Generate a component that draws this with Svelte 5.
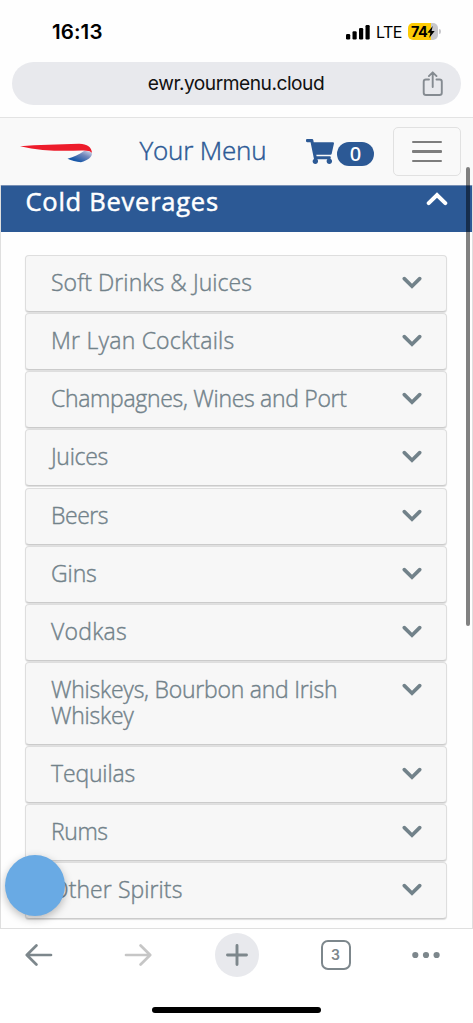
<script>
  const items = [
    { name: 'Soft Drinks & Juices', spacing: 0.08 },
    { name: 'Mr Lyan Cocktails', spacing: 0.22 },
    { name: 'Champagnes, Wines and Port', spacing: -0.31 },
    { name: 'Juices', spacing: -0.3 },
    { name: 'Beers', spacing: -0.45 },
    { name: 'Gins', spacing: -0.1 },
    { name: 'Vodkas', spacing: 0.25 },
    { name: 'Whiskeys, Bourbon and Irish Whiskey', spacing: -0.24, tall: true },
    { name: 'Tequilas', spacing: -0.15 },
    { name: 'Rums', spacing: -0.4 },
    { name: 'Other Spirits', spacing: 0.08 }
  ];
</script>

<div class="screen">
  <div class="status">
    <span class="time">16:13</span>
    <div class="indicators">
      <svg width="24" height="16" viewBox="0 0 24 16"><rect x="0" y="10" width="4.2" height="5.4" rx="1.2"/><rect x="6.5" y="7.3" width="4.2" height="8.1" rx="1.2"/><rect x="13" y="4" width="4.2" height="11.4" rx="1.2"/><rect x="19.5" y="1" width="4.2" height="14.4" rx="1.2"/></svg>
      <span class="lte">LTE</span>
      <div class="battery"><span>74</span><svg width="8" height="12" viewBox="0 0 8 12"><path d="M5.7 0 0.3 6.7H3.4L2.2 12 7.7 5H4.6Z"/></svg></div>
      <i class="cap"></i>
    </div>
  </div>

  <div class="address">
    <span>ewr.yourmenu.cloud</span>
    <svg class="share" width="22" height="26" viewBox="0 0 22 26" fill="none" stroke="#858b91" stroke-width="1.9" stroke-linecap="round" stroke-linejoin="round"><path d="M7 8.5H4Q1.7 8.5 1.7 10.8V21.7Q1.7 24 4 24H17.5Q19.8 24 19.8 21.7V10.8Q19.8 8.5 17.5 8.5H14.5M10.7 16V1.4M6.9 5.1 10.7 1.3 14.5 5.1"/></svg>
  </div>

  <nav>
    <svg class="logo" width="74" height="22" viewBox="0 0 74 22">
      <defs><linearGradient id="fin" x1="0" y1="1" x2="1" y2="0"><stop offset=".25" stop-color="#1858a8"/><stop offset=".65" stop-color="#7187bb"/><stop offset="1" stop-color="#d9dcec"/></linearGradient></defs>
      <path fill="#ed1c2b" d="M0 3.2C18 2.1 38 1.200 59 .8C67 .7 71.800 4.300 72 10C69.800 7.900 66.500 7.300 61.500 7.500C41 8.200 20 8 0 3.200Z"/>
      <path fill="url(#fin)" d="M47.5 15.8C54 14 59 11.7 64 8.1Q70 7.5 72 10.4C72 14 68 17 61 19.2C56 18.9 51.5 17.6 47.5 15.8Z"/>
    </svg>
    <a class="brand" href="#menu">Your Menu</a>
    <svg class="cart" width="28" height="25" viewBox="0 0 576 512" preserveAspectRatio="none" fill="#2c5995"><path d="M528.1 301.3l47.3-208C578.8 78.3 567.4 64 552 64H159.2l-9.2-44.8C147.8 8 137.9 0 126.5 0H24C10.7 0 0 10.7 0 24v16c0 13.3 10.7 24 24 24h69.9l70.2 343.4C147.3 417.1 136 435.2 136 456c0 30.9 25.1 56 56 56s56-25.1 56-56c0-15.7-6.4-29.8-16.8-40h209.6C430.4 426.2 424 440.3 424 456c0 30.9 25.1 56 56 56s56-25.1 56-56c0-22.2-12.9-41.3-31.6-50.4l5.5-24.3c3.4-15-8-29.3-23.4-29.3H218.1l-6.5-32h293.1c11.2 0 20.9-7.8 23.4-18.7z"/></svg>
    <span class="badge">0</span>
    <button class="toggle" aria-label="Menu"><i></i><i></i><i></i></button>
  </nav>

  <main>
    <header><h1>Cold Beverages</h1>
      <svg width="22" height="14" viewBox="0 0 22 14" fill="none" stroke="#fff" stroke-width="4" stroke-linecap="round"><path d="M2.7 11.1 11 3 19.3 11.1"/></svg>
    </header>
    <section>
      {#each items as item}
        <div class="card" class:tall={item.tall}>
          <span style="letter-spacing: {item.spacing}px">{item.name}</span>
          <svg width="20" height="13" viewBox="0 0 20 13" fill="none" stroke="#72828a" stroke-width="3.6" stroke-linecap="round"><path d="M2.3 2.6 10 10.2 17.7 2.6"/></svg>
        </div>
      {/each}
    </section>
    <div class="bubble"></div>
    <div class="scroll"></div>
  </main>

  <footer>
    <div class="tools">
      <svg width="28" height="24" viewBox="0 0 28 24" fill="none" stroke="#7d878c" stroke-width="2.7" stroke-linecap="round" stroke-linejoin="round"><path d="M26 12H2M11.4 2.5 1.8 12 11.4 21.5"/></svg>
      <svg width="28" height="24" viewBox="0 0 28 24" fill="none" stroke="#c6c6c6" stroke-width="2.7" stroke-linecap="round" stroke-linejoin="round"><path d="M2 12H26M16.6 2.5 26.2 12 16.6 21.5"/></svg>
      <div class="plus"><svg width="24" height="24" viewBox="0 0 24 24" stroke="#7d878c" stroke-width="2.9" stroke-linecap="round"><path d="M2.5 12H21.5M12 2.5V21.5"/></svg></div>
      <div class="tabs">3</div>
      <svg width="28" height="24" viewBox="0 0 28 24" fill="#7d878c"><circle cx="3.3" cy="12" r="3.1"/><circle cx="14" cy="12" r="3.1"/><circle cx="24.6" cy="12" r="3.1"/></svg>
    </div>
    <div class="home"></div>
  </footer>
</div>

<style>
  :global(body) { margin: 0; background: #fff; }
  * { box-sizing: border-box; }
  .screen { width: 473px; height: 1023px; overflow: hidden; display: flex; flex-direction: column; background: #fefefe; }
  svg { display: block; flex: none; }
  .status { height: 62px; flex: none; display: flex; justify-content: space-between; padding: 19px 32px 0 52px; font-family: Inter, sans-serif; }
  .time { font-size: 20.5px; line-height: 25px; font-weight: 600; letter-spacing: .1px; }
  .indicators { display: flex; align-items: center; height: 25px; }
  .lte { font-size: 16px; margin-left: 6px; width: 32px; letter-spacing: -.5px; }
  .battery { width: 30px; height: 17px; border-radius: 5px; background: linear-gradient(90deg, #fdcb05 77%, #c8c8cc 77%); display: flex; align-items: center; padding-left: 3px; font-size: 14.5px; font-weight: 700; letter-spacing: -.5px; }
  .cap { width: 2px; height: 5px; background: #c8c8cc; border-radius: 0 2px 2px 0; margin-left: 1px; }
  .address { height: 43px; flex: none; margin: 0 12px 12px; border-radius: 22px; background: #e8e9ed; display: grid; place-items: center; font: 19.2px/43px "Inter", sans-serif; letter-spacing: -.5px; color: #111; }
  .address > * { grid-area: 1 / 1; }
  .address span { margin-right: 1px; }
  .address .share { justify-self: end; margin: 1px 17px 0 0; }
  nav { height: 68px; flex: none; border-top: 1px solid #e3e3e3; background: #f9f9f9; display: flex; align-items: flex-start; padding-left: 20px; }
  .logo { margin-top: 25px; }
  .brand { width: 166px; padding-left: 45.5px; font: 300 26px/34px "Open Sans", sans-serif; letter-spacing: -.2px; -webkit-text-stroke: .45px; margin-top: 15px; color: #2c5995; text-decoration: none; white-space: nowrap; }
  .cart { margin: 21px 0 0 46px; }
  .badge { width: 37px; height: 24px; flex: none; margin: 24px 0 0 3px; border-radius: 12px; background: #2c5995; color: #fff; text-align: center; font: 500 20px/24px "Noto Sans", sans-serif; }
  .toggle { width: 68px; height: 49px; flex: none; margin: 9px 0 0 19px; border: 1px solid #e1e1e1; border-radius: 5px; background: none; padding: 0; display: flex; flex-direction: column; align-items: center; justify-content: center; gap: 7px; }
  .toggle i { width: 30px; height: 2.5px; border-radius: 1px; background: #7d7d7d; }
  main { height: 744px; flex: none; position: relative; border: solid #dfdfdf; border-width: 0 1px 1px; }
  header { height: 47px; background: #2c5995; border-top: 1px solid #7890b5; display: flex; justify-content: space-between; padding: 0 24px 0 24.5px; color: #fff; }
  h1 { margin: -2px 0 0; font: 400 25.5px/34px "Open Sans", sans-serif; letter-spacing: .75px; -webkit-text-stroke: .5px; white-space: nowrap; }
  header svg { margin-top: 6px; }
  section { padding: 23px 25px 0 24px; display: flex; flex-direction: column; gap: 1.15px; }
  .card { height: 57px; flex: none; border: 1px solid #dedede; border-bottom-color: #cbcbcb; border-radius: 4px; background: #f7f7f7; box-shadow: 0 1px 1px #ddd; display: flex; justify-content: space-between; padding: 12.5px 24px 0 25px; font: 300 23px/26px "Open Sans", sans-serif; -webkit-text-stroke: .4px; color: #72828a; }
  .card.tall { height: 83px; }
  .card span { width: 320px; margin-top: .5px; }
  .card svg { margin-top: 7.5px; }
  .bubble { position: absolute; left: 4px; top: 670px; width: 60px; height: 61px; border-radius: 50%; background: #69aae4; box-shadow: 0 3px 9px #0004; }
  .scroll { position: absolute; right: 2.5px; top: -18px; width: 4px; height: 459px; border-radius: 2px; background: #0000007d; }
  footer { flex: 1; background: #fff; }
  .tools { height: 52px; display: grid; grid-template-columns: 99px 99px 99px 99px 81px; margin-left: -11px; place-items: center; }
  .plus { width: 44px; height: 44px; border-radius: 50%; background: #e8e9ed; display: grid; place-items: center; }
  .tabs { width: 30px; height: 30px; border: 2px solid #7d878c; border-radius: 7px; text-align: center; font: 600 14px/26px Inter, sans-serif; color: #7d878c; }
  .home { width: 169px; height: 6px; border-radius: 3px; background: #000; margin: 26px auto 0; }
</style>
